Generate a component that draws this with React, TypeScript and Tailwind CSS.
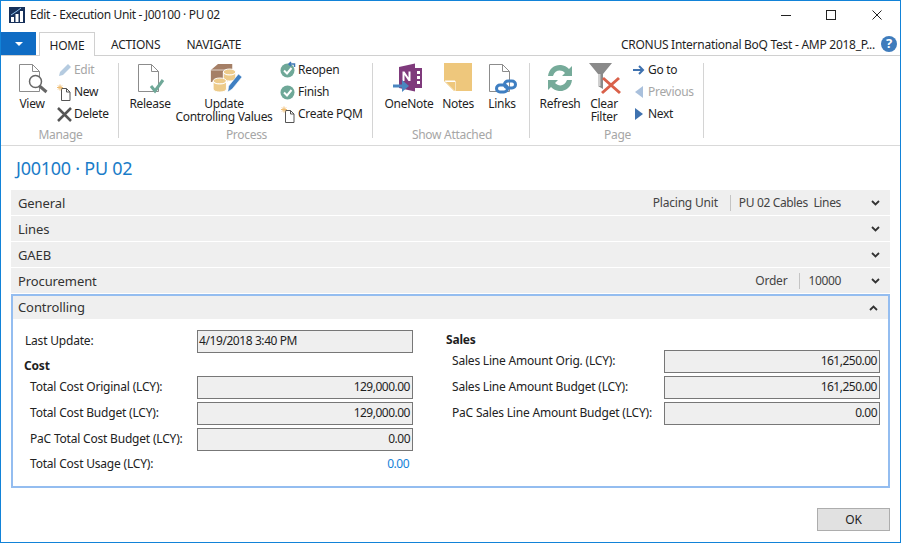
import { ReactNode } from "react";

const Doc = ({ x = 0, y = 0 }: { x?: number; y?: number }) => (
  <path
    transform={`translate(${x} ${y})`}
    d="M.5.5h13l7 7v20H.5zM13.500.5v7h7"
    fill="#fff"
    stroke="#8c8c8c"
    strokeWidth="1"
  />
);

const SmallDoc = () => (
  <svg width="18" height="18" viewBox="0 0 18 18">
    <path d="M5.500 5.500h5l3.500 3.500v8.500H5.500zM10.500 5.500V9H14" fill="#fff" stroke="#555" />
    <g stroke="#f0bd72" strokeWidth="1">
      <path d="M1 4.500h6M4 1.500v6M2 2.500l4 4M6 2.500l-4 4" />
    </g>
  </svg>
);

const GreenCheck = ({ reopen }: { reopen?: boolean }) => (
  <svg width="18" height="18" viewBox="0 0 18 18">
    <circle cx="7.500" cy="9.500" r="7" fill="#6fa898" />
    <path d="M4 9.500l3 3 4.500-5.500" fill="none" stroke="#fff" strokeWidth="2" />
    {reopen && (
      <path d="M9 3h5.500v3M11 1L9 3l2 2" fill="none" stroke="#3f78b5" strokeWidth="1.500" />
    )}
  </svg>
);

const Logo = () => (
  <svg width="17" height="16" viewBox="0 0 17 16">
    <rect width="16" height="16" fill="#17305a" />
    <path d="M2 10h3v5H2zM6.500 7h3v8h-3zM11 4h3v11h-3z" fill="#fff" />
    <path d="M2 8l6-4 4-3" fill="none" stroke="#8fc0ec" strokeWidth="1" />
  </svg>
);

const ViewIcon = () => (
  <svg width="32" height="32" viewBox="0 0 32 32">
    <Doc x={3} y={1} />
    <circle cx="19.500" cy="18.500" r="6" fill="#fff" stroke="#666" strokeWidth="1.500" />
    <path d="M23.500 23l7 6" stroke="#666" strokeWidth="3" />
  </svg>
);

const ReleaseIcon = () => (
  <svg width="32" height="32" viewBox="0 0 32 32">
    <Doc x={4} y={1} />
    <path d="M17 23l4 5 8-11" fill="none" stroke="#6fa898" strokeWidth="3" />
  </svg>
);

const UpdateIcon = () => (
  <svg width="32" height="32" viewBox="0 0 36 32" preserveAspectRatio="none" className="ml-[4px]">
    <path d="M1 7l8-6h16v10l-6 8H1z" fill="#a57f66" />
    <path d="M1 7h18v12" fill="none" stroke="#fff" strokeWidth=".7" />
    <ellipse cx="22" cy="9" rx="7" ry="3" fill="#edcb8a" stroke="#fff" />
    <path d="M15 9v6c0 4 14 4 14 0V9c0 4-14 4-14 0z" fill="#edcb8a" stroke="#fff" />
    <ellipse cx="11" cy="18" rx="7.500" ry="3" fill="#edcb8a" stroke="#fff" />
    <path d="M3.500 18v8c0 4 15 4 15 0v-8c0 4-15 4-15 0z" fill="#edcb8a" stroke="#fff" />
    <path d="M20 29l1-6L32 11l4 3-11 12z" fill="#3f7fc2" stroke="#fff" strokeWidth=".6" />
  </svg>
);

const OneNoteIcon = () => (
  <svg width="32" height="32" viewBox="0 0 32 32">
    <path d="M6 4l16-3.500v28L6 25z" fill="#7f3a7c" />
    <path d="M22 5h7v20h-7z" fill="#7f3a7c" />
    <path d="M24 8h3v3h-3zM24 13h3v3h-3zM24 18h3v3h-3z" fill="#fff" />
    <path d="M9.500 18V8.500h2l4 6v-6h2V18h-2l-4-6v6z" fill="#fff" />
    <path d="M0 23h9" stroke="#4a86c0" strokeWidth="3" />
    <path d="M9 17l7 6-7 6z" fill="#4a86c0" />
  </svg>
);

const NotesIcon = () => (
  <svg width="29" height="29" viewBox="0 0 29 29">
    <path d="M0 0h28v28H10L0 18z" fill="#eec77c" />
    <path d="M1 18h10v10" fill="#fff" stroke="#fff" strokeWidth="1" />
    <path d="M2 19h9v9z" fill="#eec77c" />
  </svg>
);

const LinksIcon = () => (
  <svg width="30" height="32" viewBox="0 0 30 32">
    <Doc x={2} y={1} />
    <g fill="none" stroke="#3f7fc2" strokeWidth="3">
      <rect x="9.500" y="22" width="11" height="7" rx="3.500" />
      <rect x="17.500" y="18" width="11" height="7" rx="3.500" />
    </g>
  </svg>
);

const RefreshIcon = () => (
  <svg width="30" height="30" viewBox="0 0 30 30">
    <g fill="#76ab9a">
      <path d="M3 13C4 5 10 1.500 16 2c3 .2 6 2 8 4l3-3v10H17l3-3c-4-4-10-3-12 3z" />
      <path d="M27 17c-1 8-7 11.500-13 11-3-.2-6-2-8-4l-3 3V17h10l-3 3c4 4 10 3 12-3z" />
    </g>
  </svg>
);

const ClearFilterIcon = () => (
  <svg width="32" height="32" viewBox="0 0 32 32" className="ml-[2px]">
    <path d="M0 0h23L14 11v15l-5-3V11z" fill="#8a8a8a" />
    <path d="M9 11h2.500v12H9z" fill="#fff" opacity=".6" />
    <path d="M14 15l17 15M30 15L13 30" stroke="#d9614a" strokeWidth="3" />
  </svg>
);

const Pencil = () => (
  <svg width="16" height="16" viewBox="0 0 16 16">
    <path d="M2 14l1-4 8-8 3 3-8 8z" fill="#b5cbe0" />
  </svg>
);

const DeleteIcon = () => (
  <svg width="18" height="16" viewBox="0 0 18 16">
    <path d="M2 2l13 13M15 2L2 15" stroke="#555" strokeWidth="2.500" />
  </svg>
);

const GoTo = () => (
  <svg width="14" height="12" viewBox="0 0 14 12">
    <path d="M1 6h9M7 2l4 4-4 4" fill="none" stroke="#3f72af" strokeWidth="2" />
  </svg>
);

const Triangle = ({ left }: { left?: boolean }) => (
  <svg width="10" height="14" viewBox="0 0 10 14">
    <path d={left ? "M9 1v12L1 7z" : "M1 1v12l8-6z"} fill={left ? "#a9c0dc" : "#3f72af"} />
  </svg>
);

const Chevron = ({ up }: { up?: boolean }) => (
  <svg width="9" height="6" viewBox="0 0 9 6">
    <path d={up ? "M1 5l3.500-3.500L8 5" : "M1 1l3.500 3.500L8 1"} fill="none" stroke="#333" strokeWidth="1.800" />
  </svg>
);

function LargeButton({ icon, label, className }: { icon: ReactNode; label: ReactNode; className: string }) {
  return (
    <div className={`flex flex-col items-center text-center leading-[13px] ${className}`}>
      <div className="flex h-[33px] items-start justify-center">{icon}</div>
      <div className="mt-[1px] whitespace-nowrap">{label}</div>
    </div>
  );
}

function SmallButton({ icon, label, muted }: { icon: ReactNode; label: string; muted?: boolean }) {
  return (
    <div className={`flex h-[22px] items-center ${muted ? "text-[#a6a6a6]" : ""}`}>
      <div className="flex w-[18px] shrink-0 justify-center">{icon}</div>
      <span className="whitespace-nowrap">{label}</span>
    </div>
  );
}

function Group({ title, className, children }: { title: string; className: string; children: ReactNode }) {
  return (
    <div className={`flex h-[75px] shrink-0 flex-col border-r border-[#d4d4d4] ${className}`}>
      <div className="flex h-[66px] shrink-0 items-start">{children}</div>
      <div className="shrink-0 pl-[2px] text-center leading-[12px] text-[#a6a6a6]">{title}</div>
    </div>
  );
}

function FastTab({ title, caption, value }: { title: string; caption?: string; value?: string }) {
  return (
    <div className="mb-px flex h-[25px] items-center bg-[#efefef] pl-[7px] pr-[10px]">
      <span className="pt-[2px] text-[13px] tracking-[-0.1px] text-[#333]">{title}</span>
      <div className="ml-auto flex items-center">
        {caption && (
          <>
            <span className="text-[#444]">{caption}</span>
            <span className="ml-[12px] mr-[8px] h-[16px] w-px bg-[#c4c4c4]" />
            <span className="mr-[30px] whitespace-pre tracking-[-0.35px] text-[#444]">{value}</span>
          </>
        )}
        <Chevron />
      </div>
    </div>
  );
}

function Field({ label, value, link, wide }: { label: string; value: string; link?: boolean; wide?: boolean }) {
  return (
    <div className={`mb-[3px] flex items-center ${link ? "h-[21px]" : "h-[23px]"}`}>
      <span className={`shrink-0 whitespace-nowrap pb-[2px] text-[#222] ${wide ? "w-[212px]" : "w-[167px]"}`}>{label}</span>
      {link ? (
        <span className="w-[216px] pb-[2px] pr-[4px] text-right tracking-[-0.5px] text-[#1482d8]">{value}</span>
      ) : (
        <span className="flex h-[23px] w-[216px] items-center justify-end border border-[#777] bg-[#efefef] pb-[1px] pr-[2px] tracking-[-0.5px]">{value}</span>
      )}
    </div>
  );
}

export default function App() {
  return (
    <div className="flex h-[543px] w-[901px] flex-col overflow-hidden border border-[#1283d8] bg-white font-['Noto_Sans','Open_Sans',sans-serif] text-[12px] tracking-[-0.2px] text-[#1f1f1f]">
      {/* title bar */}
      <div className="flex h-[31px] shrink-0 items-center pb-[3px] pl-[8px]">
        <Logo />
        <span className="ml-[4px] tracking-[-0.35px]">Edit - Execution Unit - J00100 · PU 02</span>
        <div className="ml-auto flex items-center">
          <svg width="12" height="12" viewBox="0 0 12 12" className="mr-[33px]">
            <path d="M1 6.500h10" stroke="#222" />
          </svg>
          <svg width="12" height="12" viewBox="0 0 12 12" className="mr-[34px]">
            <rect x="1.500" y="1.500" width="9" height="9" fill="none" stroke="#222" />
          </svg>
          <svg width="12" height="12" viewBox="0 0 12 12" className="mr-[17px]">
            <path d="M1.500 1.500l9 9M10.500 1.500l-9 9" stroke="#222" />
          </svg>
        </div>
      </div>

      {/* tabs */}
      <div className="flex h-[24px] shrink-0 items-stretch border-b border-[#d0d0d0]">
        <div className="flex w-[35px] items-center justify-center bg-[#0f6cc4]">
          <svg width="8" height="4" viewBox="0 0 8 4">
            <path d="M0 0h8L4 4z" fill="#fff" />
          </svg>
        </div>
        <div className="z-10 ml-[3px] flex h-[24px] w-[56px] items-center justify-center border border-b-0 border-[#d0d0d0] bg-white pt-[2px]">HOME</div>
        <div className="ml-[16px] flex items-center pt-[2px]">ACTIONS</div>
        <div className="ml-[26px] flex items-center pt-[2px]">NAVIGATE</div>
        <div className="ml-auto flex items-center pr-[3px]">
          <span className="pt-[2px] tracking-[-0.27px]">CRONUS International BoQ Test - AMP 2018_P...</span>
          <span className="ml-[6px] flex h-[16px] w-[16px] items-center justify-center rounded-full bg-[#3f7cbc] text-[13px] font-bold text-white">?</span>
        </div>
      </div>

      {/* ribbon */}
      <div className="flex h-[90px] shrink-0 items-start border-b border-[#d9d9d9] pt-[7px] tracking-[-0.3px]">
        <Group title="Manage" className="w-[118px]">
          <LargeButton icon={<ViewIcon />} label="View" className="ml-[12px] w-[38px]" />
          <div className="ml-[5px] -mt-[4px]">
            <SmallButton icon={<Pencil />} label="Edit" muted />
            <SmallButton icon={<SmallDoc />} label="New" />
            <SmallButton icon={<DeleteIcon />} label="Delete" />
          </div>
        </Group>
        <Group title="Process" className="w-[254px]">
          <LargeButton icon={<ReleaseIcon />} label="Release" className="ml-[9px] w-[44px]" />
          <LargeButton icon={<UpdateIcon />} label={<>Update<br />Controlling Values</>} className="ml-[4px] w-[96px]" />
          <div className="ml-[8px] -mt-[4px]">
            <SmallButton icon={<GreenCheck reopen />} label="Reopen" />
            <SmallButton icon={<GreenCheck />} label="Finish" />
            <SmallButton icon={<SmallDoc />} label="Create PQM" />
          </div>
        </Group>
        <Group title="Show Attached" className="w-[157px]">
          <LargeButton icon={<OneNoteIcon />} label="OneNote" className="ml-[11px] w-[50px]" />
          <LargeButton icon={<NotesIcon />} label="Notes" className="ml-[6px] w-[36px]" />
          <LargeButton icon={<LinksIcon />} label="Links" className="ml-[8px] w-[36px]" />
        </Group>
        <Group title="Page" className="w-[174px]">
          <LargeButton icon={<RefreshIcon />} label="Refresh" className="ml-[9px] w-[42px]" />
          <LargeButton icon={<ClearFilterIcon />} label={<>Clear<br />Filter</>} className="ml-[2px] w-[42px]" />
          <div className="ml-[5px] -mt-[4px]">
            <SmallButton icon={<GoTo />} label="Go to" />
            <SmallButton icon={<Triangle left />} label="Previous" muted />
            <SmallButton icon={<Triangle />} label="Next" />
          </div>
        </Group>
      </div>

      {/* page */}
      <div className="flex flex-1 flex-col px-[10px]">
        <h1 className="ml-[5px] mt-[9px] h-[35px] text-[18px] leading-[26px] tracking-[-0.25px] text-[#1a7cc8]">J00100 · PU 02</h1>
        <FastTab title="General" caption="Placing Unit" value="PU 02 Cables  Lines" />
        <FastTab title="Lines" />
        <FastTab title="GAEB" />
        <FastTab title="Procurement" caption="Order" value="10000" />

        <div className="h-[194px] border-2 border-[#94bdf0]">
          <div className="flex h-[23px] items-center bg-[#efefef] pl-[5px] pr-[10px]">
            <span className="text-[13px] tracking-[-0.1px] text-[#333]">Controlling</span>
            <span className="ml-auto"><Chevron up /></span>
          </div>
          <div className="flex pt-[11px]">
            <div className="ml-[11px] w-[422px]">
              <div className="mb-[3px] flex h-[23px] items-center">
                <span className="w-[173px] pb-[2px] pl-[1px] text-[#222]">Last Update:</span>
                <span className="flex h-[23px] w-[216px] items-center border border-[#777] bg-[#efefef] pb-[1px] pl-[1px] tracking-[-0.42px]">4/19/2018 3:40 PM</span>
              </div>
              <div className="flex h-[20px] items-center font-bold">Cost</div>
              <div className="ml-[6px]">
                <Field label="Total Cost Original (LCY):" value="129,000.00" />
                <Field label="Total Cost Budget (LCY):" value="129,000.00" />
                <Field label="PaC Total Cost Budget (LCY):" value="0.00" />
                <Field label="Total Cost Usage (LCY):" value="0.00" link />
              </div>
            </div>
            <div>
              <div className="flex h-[20px] items-center font-bold">Sales</div>
              <div className="ml-[6px]">
                <Field label="Sales Line Amount Orig. (LCY):" value="161,250.00" wide />
                <Field label="Sales Line Amount Budget (LCY):" value="161,250.00" wide />
                <Field label="PaC Sales Line Amount Budget (LCY):" value="0.00" wide />
              </div>
            </div>
          </div>
        </div>

        <div className="mt-[20px] flex justify-end">
          <button className="h-[23px] w-[73px] border border-[#adadad] bg-[#e1e1e1]">OK</button>
        </div>
      </div>
    </div>
  );
}
